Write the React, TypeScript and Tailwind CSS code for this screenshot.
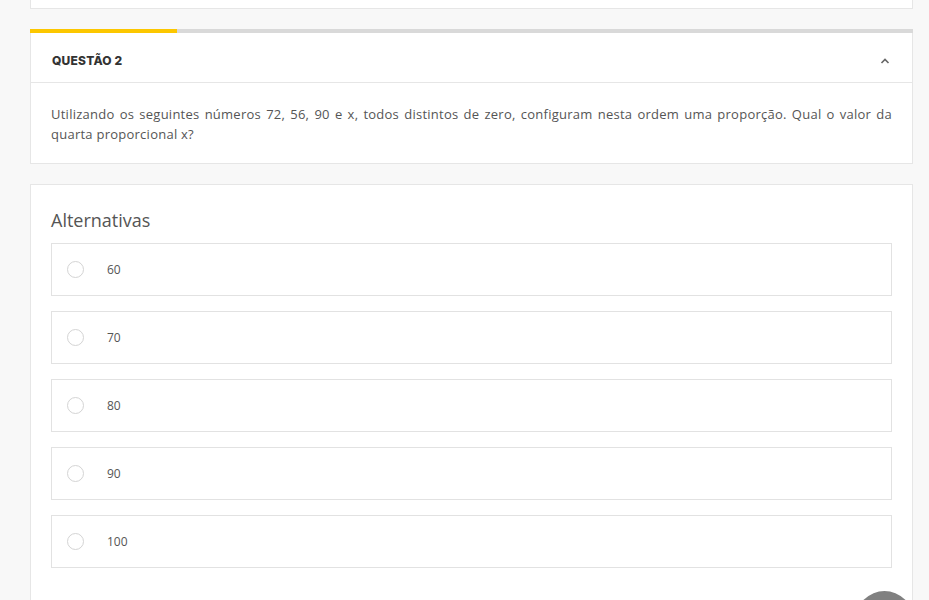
import React from "react";

const options = ["60", "70", "80", "90", "100"];

export default function App() {
  return (
    <div
      className="relative min-h-[600px] w-[929px] overflow-hidden bg-[#f8f8f8] pl-[30px] pr-[16px]"
      style={{ fontFamily: '"Open Sans", "Noto Sans", Arial, sans-serif' }}
    >
      {/* previous card tail */}
      <div className="h-[9px] border-x border-b border-[#e6e6e6] bg-white" />

      {/* progress bar */}
      <div className="mt-[20px] flex h-[4px] bg-[#d9d9d9]">
        <div className="h-full w-[147px] bg-[#fcc700]" />
      </div>

      {/* question card */}
      <div className="border-x border-b border-[#e6e6e6] bg-white">
        <div className="flex h-[50px] items-center justify-between border-b border-[#e6e6e6] pl-[21px] pr-[22px] pt-[7px]">
          <span
            className="text-[12px] font-extrabold tracking-[0.2px] text-[#333]"
            style={{ fontFamily: '"Inter", "Lato", Arial, sans-serif' }}
          >
            QUESTÃO 2
          </span>
          <svg width="10" height="6" viewBox="0 0 10 6" fill="none">
            <path d="M1.5 5L5 1.5L8.5 5" stroke="#666" strokeWidth="1.6" />
          </svg>
        </div>
        <div className="px-[20px] pb-[19px] pt-[21px] text-justify text-[13px] leading-[20px] tracking-[0.25px] text-[#555]">
          Utilizando os seguintes números 72, 56, 90 e x, todos distintos de zero, configuram nesta ordem uma proporção. Qual o valor da quarta proporcional x?
        </div>
      </div>

      {/* alternatives card */}
      <div className="mt-[20px] h-[500px] border border-[#e6e6e6] bg-white px-[20px] pt-[22px]">
        <div className="text-[18px] leading-[26px] text-[#555]">Alternativas</div>
        <div className="mt-[10px] flex flex-col gap-[15px]">
          {options.map((o) => (
            <div
              key={o}
              className="flex h-[53px] items-center border border-[#e2e2e2] bg-white pl-[15px]"
            >
              <span className="h-[17px] w-[17px] rounded-full border border-[#d4d4d4]" />
              <span className="ml-[23px] text-[12px] text-[#555]">{o}</span>
            </div>
          ))}
        </div>
      </div>

      {/* floating button */}
      <div className="absolute left-[856px] top-[591px] h-[57px] w-[57px] rounded-full bg-[#808080]" />
    </div>
  );
}
